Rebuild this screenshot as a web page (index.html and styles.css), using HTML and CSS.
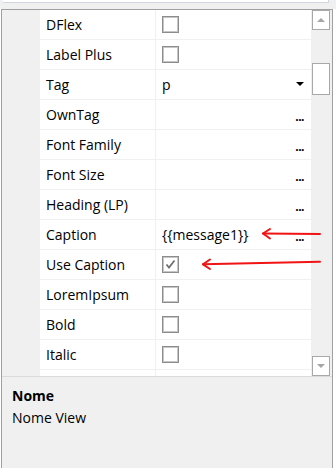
FILE: index.html
```html
<!DOCTYPE html>
<html lang="en">
<head>
  <meta charset="UTF-8">
  <meta name="viewport" content="width=device-width, initial-scale=1.0">
  <title>Properties</title>
  <link rel="stylesheet" href="styles.css">
</head>
<body>
  <div class="top"><div class="top-input"></div></div>
  <div class="frame">
    <div class="grid-area">
      <div class="gutter"></div>
      <div class="rows">
        <div class="row"><div class="name">DFlex</div><div class="value"><span class="check"></span></div></div>
        <div class="row"><div class="name">Label Plus</div><div class="value"><span class="check"></span></div></div>
        <div class="row"><div class="name">Tag</div><div class="value"><span>p</span><span class="drop"></span></div></div>
        <div class="row"><div class="name">OwnTag</div><div class="value"><span></span><span class="dots">...</span></div></div>
        <div class="row"><div class="name">Font Family</div><div class="value"><span></span><span class="dots">...</span></div></div>
        <div class="row"><div class="name">Font Size</div><div class="value"><span></span><span class="dots">...</span></div></div>
        <div class="row"><div class="name">Heading (LP)</div><div class="value"><span></span><span class="dots">...</span></div></div>
        <div class="row"><div class="name">Caption</div><div class="value"><span>{{message1}}</span><span class="dots">...</span></div></div>
        <div class="row"><div class="name">Use Caption</div><div class="value">
          <span class="check">
            <svg width="15" height="15" viewBox="0 0 15 15"><path d="M3.5 7.5 L6 10.5 L11.5 3.5" fill="none" stroke="#707070" stroke-width="1.8"/></svg>
          </span>
        </div></div>
        <div class="row"><div class="name">LoremIpsum</div><div class="value"><span class="check"></span></div></div>
        <div class="row"><div class="name">Bold</div><div class="value"><span class="check"></span></div></div>
        <div class="row"><div class="name">Italic</div><div class="value"><span class="check"></span></div></div>
        <div class="row"><div class="name"></div><div class="value"></div></div>
      </div>
      <div class="scrollbar">
        <div class="sb-btn"><span class="tri-up"></span></div>
        <div class="sb-thumb"></div>
        <div class="sb-btn down"><span class="tri-down"></span></div>
      </div>
    </div>
    <div class="desc">
      <div class="desc-title">Nome</div>
      <div class="desc-text">Nome View</div>
    </div>
  </div>

  <svg class="arrows" width="336" height="468" viewBox="0 0 336 468">
    <g fill="none" stroke="#f01414" stroke-width="2" stroke-linecap="round" stroke-linejoin="round">
      <path d="M320 234 L263 233.5"/>
      <path d="M270 229 L263 233.5 L270 238.5"/>
      <path d="M320 261.7 L203 264.3"/>
      <path d="M210 259.5 L203 264.3 L210 269"/>
    </g>
  </svg>
</body>
</html>
```

FILE: styles.css
```css
body {
  margin: 0;
  font-family: "Open Sans", "Noto Sans", sans-serif;
  font-size: 14px;
  color: #000;
  background: #fff;
  height: 468px;
  overflow: hidden;
  position: relative;
}

.top {
  height: 9px;
  background: #f0f0f0;
}

.top-input {
  margin-left: 3px;
  width: 326px;
  height: 3px;
  box-sizing: border-box;
  background: #fff;
  border-right: 1px solid #cfd6df;
  border-bottom: 1px solid #cfd6df;
}

.frame {
  margin-left: 1px;
  width: 330px;
  height: 459px;
  box-sizing: content-box;
  border: 1px solid #a0a0a0;
  border-bottom: none;
  background: #f0f0f0;
}

.grid-area {
  display: flex;
  height: 366px;
  border-bottom: 1px solid #dadada;
}

.gutter {
  width: 38px;
  background: #f0f0f0;
}

.rows {
  width: 271px;
  overflow: hidden;
  background: #fff;
}

.row {
  display: flex;
  height: 30px;
  box-sizing: border-box;
  border-bottom: 1px solid #f0f0f0;
}

.name {
  width: 116px;
  box-sizing: border-box;
  padding-left: 6px;
  border-right: 1px solid #f0f0f0;
  line-height: 29px;
  white-space: nowrap;
}

.value {
  flex: 1;
  display: flex;
  align-items: center;
  justify-content: space-between;
  padding: 0 7px 0 6px;
  line-height: 29px;
}

.check {
  width: 17px;
  height: 17px;
  box-sizing: border-box;
  border: 1px solid #8c8c8c;
  box-shadow: inset 0 0 0 1px #c6c6c6;
  background: #fff;
  display: flex;
  align-items: center;
  justify-content: center;
}

.drop {
  width: 0;
  height: 0;
  border-left: 4px solid transparent;
  border-right: 4px solid transparent;
  border-top: 4px solid #000;
  margin-top: -2px;
}

.dots {
  font-size: 12px;
  font-weight: bold;
  letter-spacing: -0.5px;
  margin-top: 3px;
}

.scrollbar {
  width: 21px;
  box-sizing: border-box;
  padding-left: 1px;
  background: #f0f0f0;
  display: flex;
  flex-direction: column;
}

.sb-btn,
.sb-thumb {
  width: 18px;
  box-sizing: border-box;
  border: 1px solid #a8a8a8;
  background: #fff;
}

.sb-btn {
  height: 20px;
  display: flex;
  align-items: center;
  justify-content: center;
}

.sb-thumb {
  height: 32px;
  margin-top: 33px;
}

.down {
  margin-top: auto;
}

.tri-up,
.tri-down {
  width: 0;
  height: 0;
  border-left: 4px solid transparent;
  border-right: 4px solid transparent;
}

.tri-up {
  border-bottom: 4px solid #a6a6a6;
}

.tri-down {
  border-top: 4px solid #a6a6a6;
}

.desc {
  padding: 8px 10px 0;
}

.desc-title,
.desc-text {
  line-height: 22px;
  white-space: nowrap;
}

.desc-title {
  font-weight: bold;
}

.arrows {
  position: absolute;
  left: 0;
  top: 0;
  pointer-events: none;
}
```
